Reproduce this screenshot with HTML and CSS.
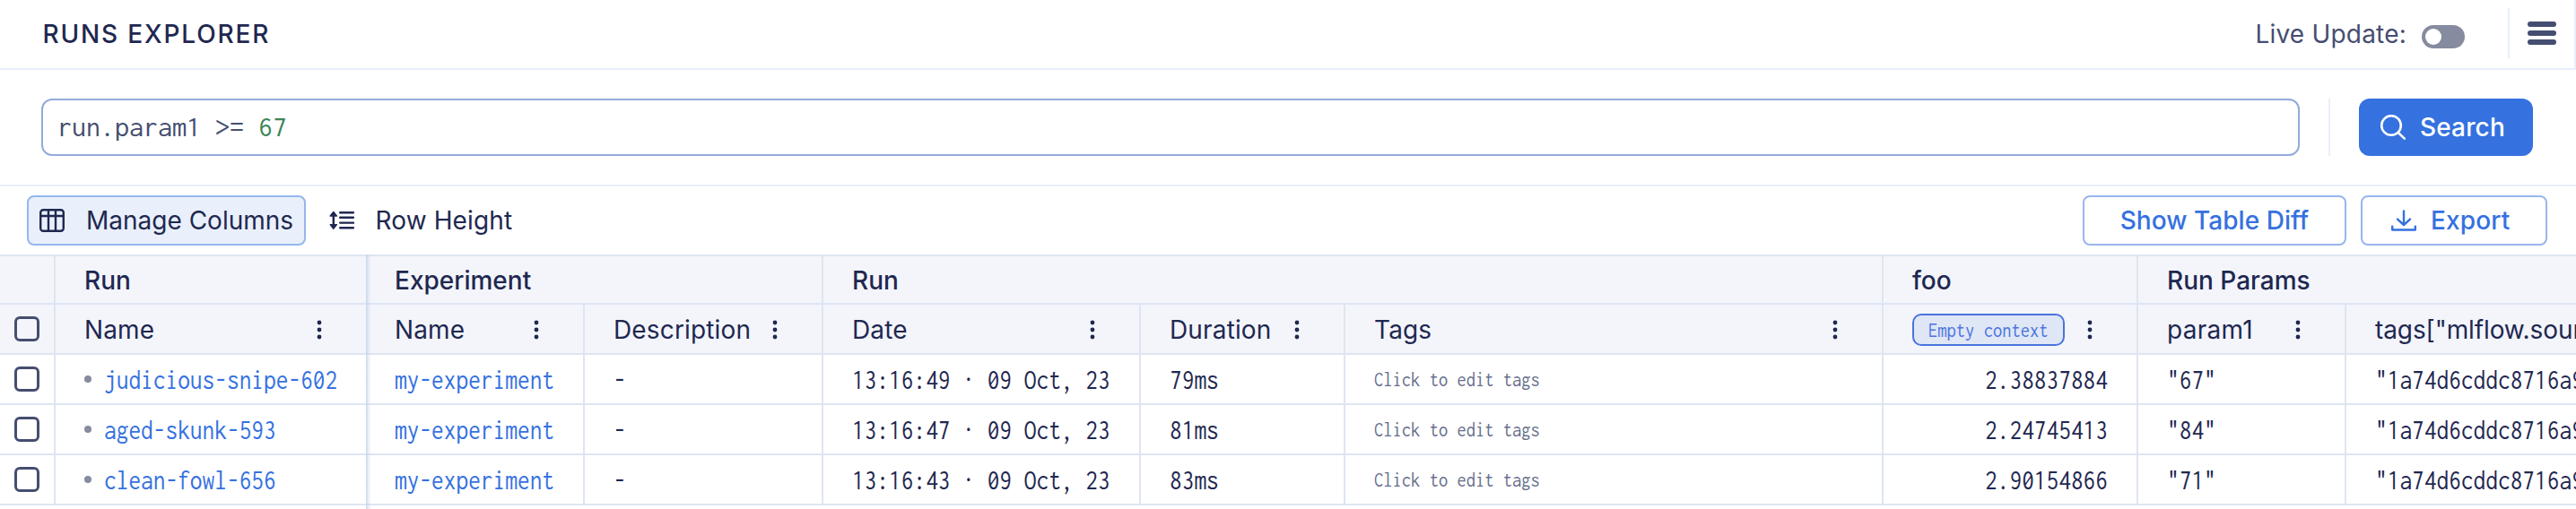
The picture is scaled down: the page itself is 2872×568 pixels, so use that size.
FILE: index.html
```
<!DOCTYPE html>
<html lang="en">
<head>
<meta charset="utf-8">
<title>Runs Explorer</title>
<link rel="stylesheet" href="styles.css">
</head>
<body>
<svg class="defs" aria-hidden="true">
  <symbol id="kebab" viewBox="0 0 8 24"><circle cx="4" cy="4" r="2.4"/><circle cx="4" cy="12" r="2.4"/><circle cx="4" cy="20" r="2.4"/></symbol>
</svg>
<div class="app">
  <header class="topbar">
    <h1 class="title">RUNS EXPLORER</h1>
    <div class="live">
      <span class="live-label">Live Update:</span>
      <span class="toggle"><span class="knob"></span></span>
    </div>
    <div class="menu"><span class="bar"></span><span class="bar"></span><span class="bar"></span></div>
  </header>

  <section class="searchbar">
    <div class="query"><span class="mono-wide">run.param1 &gt;= <span class="num">67</span></span></div>
    <div class="divider"></div>
    <button class="search">
      <svg width="28" height="28" viewBox="0 0 28 28" fill="none" stroke="currentColor" stroke-width="2.6" stroke-linecap="round"><circle cx="12" cy="12" r="10.8"/><path d="M19.8 20L26.8 26.6"/></svg>
      <span>Search</span>
    </button>
  </section>

  <section class="toolbar">
    <button class="tool active">
      <svg width="28" height="26" viewBox="0 0 28 26" fill="none" stroke="currentColor" stroke-width="2.4"><rect x="1.2" y="1.2" width="25.6" height="23.6" rx="3"/><path d="M1.2 8H26.8M10 1.2V24.8M18 1.2V24.8"/></svg>
      <span>Manage Columns</span>
    </button>
    <button class="tool rowheight">
      <svg width="28" height="22" viewBox="0 0 28 22" fill="none" stroke="currentColor" stroke-width="2.4" stroke-linecap="round"><path d="M12.2 2.2H27M12.2 7.8H27M12.2 13.6H27M12.2 19.2H27M4.8 5V16"/><path d="M4.8 1.4L8.4 6H1.2ZM4.8 20.2L8.4 15.6H1.2Z" fill="currentColor" stroke-width="1.4" stroke-linejoin="round"/></svg>
      <span>Row Height</span>
    </button>
    <button class="outline diff">Show Table Diff</button>
    <button class="outline export">
      <svg width="28" height="24" viewBox="0 0 28 24" fill="none" stroke="currentColor" stroke-width="2.4" stroke-linecap="round" stroke-linejoin="round"><path d="M14 1.4V16.4M7 10.6L14 17L21 10.6"/><path d="M1.2 18.6V22.5H26.8V18.6"/></svg>
      <span>Export</span>
    </button>
  </section>

  <main class="table">
    <div class="row head groups">
      <div class="cell check"></div>
      <div class="cell pinned">Run</div>
      <div class="cell span2">Experiment</div>
      <div class="cell span3">Run</div>
      <div class="cell">foo</div>
      <div class="cell span2 last">Run Params</div>
    </div>
    <div class="row head names">
      <div class="cell check"><span class="box"></span></div>
      <div class="cell pinned"><span>Name</span><svg class="kebab"><use href="#kebab"/></svg></div>
      <div class="cell"><span>Name</span><svg class="kebab"><use href="#kebab"/></svg></div>
      <div class="cell"><span>Description</span><svg class="kebab"><use href="#kebab"/></svg></div>
      <div class="cell"><span>Date</span><svg class="kebab"><use href="#kebab"/></svg></div>
      <div class="cell"><span>Duration</span><svg class="kebab"><use href="#kebab"/></svg></div>
      <div class="cell"><span>Tags</span><svg class="kebab"><use href="#kebab"/></svg></div>
      <div class="cell"><span class="pill"><span class="mono-small">Empty context</span></span><svg class="kebab"><use href="#kebab"/></svg></div>
      <div class="cell"><span class="param">param1</span><svg class="kebab"><use href="#kebab"/></svg></div>
      <div class="cell last"><span class="path">tags["mlflow.source.git.commit"]</span></div>
    </div>
    <div class="row">
      <div class="cell check"><span class="box"></span></div>
      <div class="cell pinned"><span class="dot"></span><span class="mono link">judicious-snipe-602</span></div>
      <div class="cell"><span class="mono link">my-experiment</span></div>
      <div class="cell"><span class="mono">-</span></div>
      <div class="cell"><span class="mono">13:16:49 · 09 Oct, 23</span></div>
      <div class="cell"><span class="mono">79ms</span></div>
      <div class="cell"><span class="mono-small hint">Click to edit tags</span></div>
      <div class="cell number"><span class="mono">2.38837884</span></div>
      <div class="cell"><span class="mono">"67"</span></div>
      <div class="cell last"><span class="mono">"1a74d6cddc8716a9"</span></div>
    </div>
    <div class="row">
      <div class="cell check"><span class="box"></span></div>
      <div class="cell pinned"><span class="dot"></span><span class="mono link">aged-skunk-593</span></div>
      <div class="cell"><span class="mono link">my-experiment</span></div>
      <div class="cell"><span class="mono">-</span></div>
      <div class="cell"><span class="mono">13:16:47 · 09 Oct, 23</span></div>
      <div class="cell"><span class="mono">81ms</span></div>
      <div class="cell"><span class="mono-small hint">Click to edit tags</span></div>
      <div class="cell number"><span class="mono">2.24745413</span></div>
      <div class="cell"><span class="mono">"84"</span></div>
      <div class="cell last"><span class="mono">"1a74d6cddc8716a9"</span></div>
    </div>
    <div class="row">
      <div class="cell check"><span class="box"></span></div>
      <div class="cell pinned"><span class="dot"></span><span class="mono link">clean-fowl-656</span></div>
      <div class="cell"><span class="mono link">my-experiment</span></div>
      <div class="cell"><span class="mono">-</span></div>
      <div class="cell"><span class="mono">13:16:43 · 09 Oct, 23</span></div>
      <div class="cell"><span class="mono">83ms</span></div>
      <div class="cell"><span class="mono-small hint">Click to edit tags</span></div>
      <div class="cell number"><span class="mono">2.90154866</span></div>
      <div class="cell"><span class="mono">"71"</span></div>
      <div class="cell last"><span class="mono">"1a74d6cddc8716a9"</span></div>
    </div>
    <div class="pin-shadow"></div>
  </main>
</div>
</body>
</html>
```
FILE: styles.css
```
* { box-sizing: border-box; }
body { margin: 0; background: #fff; }
.defs { position: absolute; width: 0; height: 0; }
.app {
  width: 2872px; height: 568px; overflow: hidden;
  display: flex; flex-direction: column;
  font: 400 28px/36px Inter, "Liberation Sans", sans-serif;
  color: #1f2850;
}
button { font: inherit; border: 0; background: none; padding: 0; display: flex; align-items: center; white-space: nowrap; }
svg { flex: none; display: block; }

.topbar { height: 78px; display: flex; align-items: center; border-bottom: 2px solid #e8effa; border-right: 2px solid #e8effa; padding-left: 47.5px; }
.title { margin: 0; font-size: 28px; font-weight: 500; letter-spacing: 1.85px; }
.live { margin-left: auto; display: flex; align-items: center; color: #454e70; letter-spacing: .2px; }
.toggle { width: 48px; height: 26px; margin: 6px 0 0 17px; border-radius: 13px; background: #868b9f; padding: 4px; }
.knob { display: block; width: 18px; height: 18px; border-radius: 50%; background: #fff; }
.menu { height: 56px; margin: -2px 0 0 48px; padding: 0 20px; border-left: 2px solid #e8effa; display: flex; flex-direction: column; justify-content: center; gap: 4px; }
.bar { width: 32px; height: 6px; border-radius: 3px; background: #454e70; }

.searchbar { height: 130px; display: flex; align-items: center; border-bottom: 2px solid #e8effa; padding: 0 48px 0 46px; }
.query { flex: 1; height: 64px; border: 2px solid #92abda; border-radius: 12px; padding-left: 16px; display: flex; align-items: center; color: #454e70; }
.num { color: #3c8659; }
.divider { width: 2px; height: 64px; margin: 0 32px; background: #e8effa; }
.search { width: 194px; height: 64px; border-radius: 12px; padding-left: 24px; gap: 16px; background: #3571df; color: #fff; font-weight: 450; letter-spacing: .15px; }

.toolbar { height: 76px; display: flex; align-items: center; padding: 0 32px 0 30px; }
.tool { color: #1f2850; }
.active { width: 311px; height: 56px; padding-left: 12px; gap: 24px; border: 2px solid #93b7ee; border-radius: 8px; background: #e9f0fb; }
.rowheight { margin-left: 26px; gap: 23.5px; letter-spacing: .12px; }
.outline { height: 56px; border: 2px solid #98b6ee; border-radius: 8px; color: #3571df; font-weight: 450; letter-spacing: .05px; background: #fff; }
.diff { width: 294px; margin-left: auto; margin-right: 16px; justify-content: center; }
.export { width: 208px; padding-left: 32px; gap: 16px; letter-spacing: .15px; }

.table { flex: 1; position: relative; border-top: 2px solid #dee5f2; }
.row { height: 56px; display: grid; grid-template-columns: 62px 346px 244px 266px 354px 228px 600px 284px 232px 256px; border-bottom: 2px solid #dee5f2; }
.cell { min-width: 0; overflow: hidden; display: flex; align-items: center; padding-left: 32px; border-right: 2px solid #dee5f2; white-space: nowrap; }
.check { padding-left: 16px; }
.pinned, .last { border-right: 0; }
.head { background: #f3f5fb; letter-spacing: .15px; }
.head .cell:not(.check) { padding-top: 2px; }
.groups { height: 54px; font-weight: 550; letter-spacing: 0; }
.span2 { grid-column: span 2; }
.span3 { grid-column: span 3; }
.kebab { width: 8px; height: 24px; margin: 0 48px 0 auto; fill: #1f2850; }
.param { letter-spacing: .3px; }
.path { letter-spacing: -.1px; }
.box { width: 28px; height: 28px; border: 3px solid #454e70; border-radius: 6px; }
.dot { width: 8px; height: 8px; flex: none; margin-right: 14px; border-radius: 50%; background: #868b9f; }
.pill { height: 36px; width: 170px; flex: none; border: 2px solid #4a74dd; border-radius: 10px; background: #dfe6f6; color: #4a74dd; padding-left: 16px; display: flex; align-items: center; }

.mono, .mono-small, .mono-wide { font-family: Inconsolata, "Noto Sans Mono CJK SC", "DejaVu Sans Mono", monospace; white-space: pre; letter-spacing: 0; }
.mono-wide { font-size: 32px; }
.mono { font-size: 32px; margin-top: 2px; transform: scaleX(.856); transform-origin: 0 50%; }
.mono-small { font-size: 24px; transform: scaleX(.856); transform-origin: 0 50%; }
.link { color: #3571df; }
.hint { color: #676f8c; }
.number { justify-content: flex-end; padding-right: 32px; }
.number .mono { transform-origin: 100% 50%; }

.pin-shadow { position: absolute; left: 408px; top: -2px; bottom: 0; width: 6px; background: linear-gradient(to right, rgba(196, 210, 234, .9), rgba(201, 214, 236, .35) 50%, rgba(201, 214, 236, 0)); }
```
